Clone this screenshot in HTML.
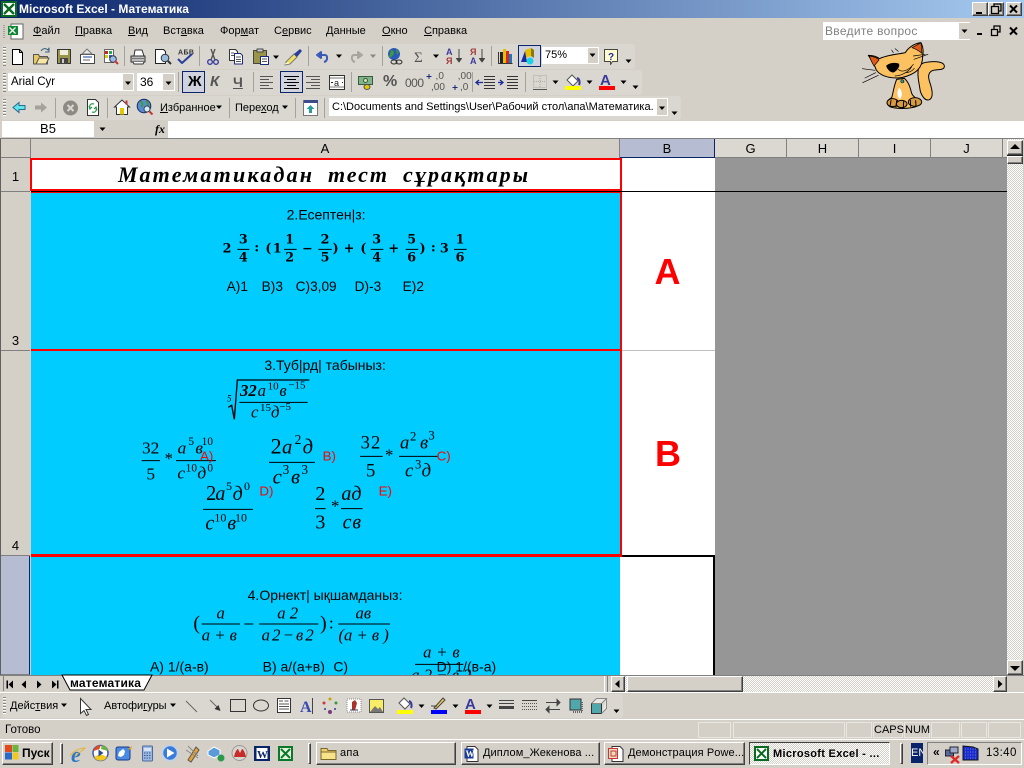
<!DOCTYPE html>
<html lang="ru">
<head>
<meta charset="utf-8">
<title>Microsoft Excel - Математика</title>
<style>
html,body{margin:0;padding:0;background:#d4d0c8}
#p{position:relative;width:1024px;height:768px;overflow:hidden;background:#d4d0c8;font:11px/14px "Liberation Sans","Noto Sans CJK JP",sans-serif;color:#000}
#p div,#p span.t{position:absolute;white-space:nowrap}
.tb{background:#dad7d0;border-radius:3px}
.grip{width:3px;background:repeating-linear-gradient(#8a877f 0 1px,#fff 1px 2px,transparent 2px 3px)}
.up{background:#d4d0c8;border:1px solid;border-color:#fff #404040 #404040 #fff;box-shadow:inset -1px -1px #808080;box-sizing:border-box}
.sel{background:#d0d3de;border:1px solid #0a246a;box-sizing:border-box}
.w{background:#fff}
.h{background:#dbd8d1;border-right:1px solid #808080;box-sizing:border-box;text-align:center;line-height:19px;font-size:13px}
.rh{left:1px;width:29px;background:#d4d0c8;text-align:center;font-size:13px;box-sizing:border-box;border-bottom:1px solid #808080}
.dith{background:repeating-conic-gradient(#fff 0 25%,#d4d0c8 0 50%) 0 0/2px 2px}
svg{position:absolute;left:0;top:0}
u{text-decoration-thickness:1px;text-underline-offset:1px}
</style>
</head>
<body>
<div id="p">

<!-- title bar -->
<div style="left:0;top:0;width:1024px;height:18px;background:linear-gradient(90deg,#0a246a,#a6caf0)"></div>
<div style="left:19px;top:2px;color:#fff;font-weight:bold;font-size:12px">Microsoft Excel - Математика</div>
<div class="up" style="left:972px;top:2px;width:16px;height:14px"></div>
<div class="up" style="left:988px;top:2px;width:16px;height:14px"></div>
<div class="up" style="left:1006px;top:2px;width:16px;height:14px"></div>

<!-- menu -->
<div style="left:33px;top:24px"><u>Ф</u>айл</div>
<div style="left:75px;top:24px"><u>П</u>равка</div>
<div style="left:128px;top:24px"><u>В</u>ид</div>
<div style="left:163px;top:24px">Вст<u>а</u>вка</div>
<div style="left:220px;top:24px">Фор<u>м</u>ат</div>
<div style="left:274px;top:24px">С<u>е</u>рвис</div>
<div style="left:326px;top:24px"><u>Д</u>анные</div>
<div style="left:382px;top:24px"><u>О</u>кно</div>
<div style="left:424px;top:24px"><u>С</u>правка</div>

<div class="w" style="left:823px;top:22px;width:147px;height:18px"></div>
<div style="left:825px;top:24px;color:#808080;font-size:12px;letter-spacing:.3px">Введите вопрос</div>
<div style="left:959px;top:23px;width:11px;height:16px;background:#d4d0c8"></div>

<!-- toolbars -->
<div class="tb" style="left:2px;top:44px;width:633px;height:25px"></div>
<div class="tb" style="left:2px;top:70px;width:640px;height:25px"></div>
<div class="tb" style="left:2px;top:96px;width:679px;height:24px"></div>
<div class="grip" style="left:3px;top:47px;height:19px"></div>
<div class="grip" style="left:3px;top:73px;height:19px"></div>
<div class="grip" style="left:3px;top:99px;height:18px"></div>

<div class="sel" style="left:518px;top:45px;width:23px;height:22px"></div>
<div class="w" style="left:542px;top:47px;width:45px;height:17px"></div>
<div style="left:545px;top:48px">75%</div>
<div class="w" style="left:587px;top:47px;width:12px;height:17px"></div>
<div style="left:588px;top:48px;width:10px;height:15px;background:#d4d0c8"></div>

<div class="w" style="left:8px;top:73px;width:126px;height:18px"></div>
<div style="left:11px;top:75px;font-size:11.500px">Arial Cyr</div>
<div style="left:123px;top:74px;width:10px;height:16px;background:#d4d0c8"></div>
<div class="w" style="left:137px;top:73px;width:38px;height:18px"></div>
<div style="left:140px;top:75px;font-size:12px">36</div>
<div style="left:163px;top:74px;width:11px;height:16px;background:#d4d0c8"></div>
<div class="sel" style="left:182px;top:71px;width:23px;height:22px"></div>
<div class="sel" style="left:280px;top:71px;width:23px;height:22px"></div>
<div style="left:188px;top:74px;font:bold 15px/16px 'Liberation Sans',sans-serif">Ж</div>
<div style="left:210px;top:74px;font:bold italic 15px/16px 'Liberation Sans',sans-serif;color:#555">К</div>
<div style="left:233px;top:74px;font:bold 14px/16px 'Liberation Sans',sans-serif;color:#555;text-decoration:underline">Ч</div>
<div style="left:383px;top:74px;font:bold 16px/16px 'Liberation Sans',sans-serif;color:#555">%</div>
<div style="left:405px;top:76px;font:12px/14px 'Liberation Sans',sans-serif;color:#555;letter-spacing:-.5px">000</div>
<div style="left:430px;top:72px;font:10px/10px 'Liberation Sans',sans-serif;color:#555">&nbsp;&nbsp;,0</div>
<div style="left:431px;top:83px;font:10px/10px 'Liberation Sans',sans-serif;color:#555">,00</div>
<div style="left:455px;top:72px;font:10px/10px 'Liberation Sans',sans-serif;color:#555">&nbsp;,00</div>
<div style="left:460px;top:83px;font:10px/10px 'Liberation Sans',sans-serif;color:#555">,0</div>

<div style="left:160px;top:101px"><u>И</u>збранное</div>
<div style="left:235px;top:101px">Пере<u>х</u>од</div>
<div class="w" style="left:329px;top:98px;width:339px;height:18px"></div>
<div style="left:332px;top:100px">C:\Documents and Settings\User\Рабочий стол\апа\Математика.</div>
<div style="left:657px;top:99px;width:10px;height:16px;background:#d4d0c8"></div>

<!-- formula bar -->
<div class="w" style="left:2px;top:121px;width:92px;height:16px"></div>
<div style="left:2px;top:122px;width:92px;text-align:center;font-size:13px">B5</div>
<div class="w" style="left:168px;top:121px;width:856px;height:17px"></div>
<div style="left:155px;top:122px;font:italic bold 12px/14px 'Liberation Serif',serif">fx</div>

<!-- grid header -->
<div style="left:0;top:138px;width:1024px;height:1px;background:#808080"></div>
<div style="left:0;top:139px;width:1px;height:536px;background:#606060"></div>
<div class="h" style="left:1px;top:139px;width:30px;height:19px;background:#d4d0c8;border-bottom:1px solid #808080"></div>
<div class="h" style="left:31px;top:139px;width:589px;height:19px;background:#d4d0c8">A</div>
<div class="h" style="left:620px;top:139px;width:95px;height:19px;background:#b6bdd2;border-right:1px solid #0a246a;border-bottom:1px solid #0a246a">B</div>
<div class="h" style="left:715px;top:139px;width:72px;height:18px">G</div>
<div class="h" style="left:787px;top:139px;width:72px;height:18px">H</div>
<div class="h" style="left:859px;top:139px;width:72px;height:18px">I</div>
<div class="h" style="left:931px;top:139px;width:72px;height:18px">J</div>
<div style="left:1003px;top:139px;width:4px;height:18px;background:#dbd8d1"></div>

<!-- row headers -->
<div class="rh" style="top:158px;height:34px;padding-top:12px">1</div>
<div class="rh" style="top:192px;height:159px;padding-top:142px">3</div>
<div class="rh" style="top:351px;height:205px;padding-top:188px">4</div>
<div class="rh" style="top:556px;height:119px;background:#b6bdd2;border-right:1px solid #0a246a"></div>

<!-- cells -->
<div style="left:31px;top:158px;width:976px;height:517px;background:#969696"></div>
<div class="w" style="left:31px;top:158px;width:684px;height:517px"></div>
<div style="left:31px;top:192px;width:589px;height:483px;background:#00ccff"></div>
<div style="left:31px;top:158px;width:590px;height:2px;background:#f00"></div>
<div style="left:31px;top:189px;width:591px;height:2px;background:#f00"></div>
<div style="left:31px;top:192px;width:591px;height:1px;background:#f00"></div>
<div style="left:31px;top:191px;width:976px;height:1px;background:#000"></div>
<div style="left:31px;top:349px;width:591px;height:2px;background:#f00"></div>
<div style="left:31px;top:554px;width:591px;height:3px;background:#f00"></div>
<div style="left:620px;top:158px;width:2px;height:33px;background:#f00"></div>
<div style="left:620px;top:192px;width:2px;height:365px;background:#f00"></div>
<div style="left:30px;top:158px;width:2px;height:33px;background:#f00"></div>
<div style="left:622px;top:350px;width:93px;height:1px;background:#c0c0c0"></div>
<div style="left:622px;top:555px;width:93px;height:2px;background:#000"></div>
<div style="left:713px;top:555px;width:2px;height:120px;background:#000"></div>
<div style="left:715px;top:157px;width:292px;height:1px;background:#808080"></div>

<div style="left:0;top:0;width:1024px;height:768px;pointer-events:none">
<svg width="1024" height="768" viewBox="0 0 1024 768" xmlns="http://www.w3.org/2000/svg" style="overflow:hidden">
<defs>
<path id="dr" d="M-3 -1.500h6l-3 3.500z" fill="#000"/>
<path id="drg" d="M-3 -1.500h6l-3 3.500z" fill="#888"/>
</defs>

<!-- ==== MATH ==== -->
<g font-family="'Liberation Serif',serif" fill="#000">
  <text x="118" y="182" font-size="22" font-weight="bold" font-style="italic" textLength="194" lengthAdjust="spacing">Математикадан</text>
  <text x="328" y="182" font-size="22" font-weight="bold" font-style="italic" textLength="59" lengthAdjust="spacing">тест</text>
  <text x="403" y="182" font-size="22" font-weight="bold" font-style="italic" textLength="125" lengthAdjust="spacing">сұрақтары</text>
</g>

<!-- Q2 -->
<g transform="translate(100,160) scale(.33333)">
  <text x="560" y="178" font-family="'Liberation Sans',sans-serif" font-size="42">2.Есептен|з:</text>
  <g font-family="'DejaVu Serif',serif" font-weight="bold" font-size="38" text-anchor="middle">
    <text x="381" y="277">2</text>
    <text x="430" y="250">3</text><text x="430" y="305">4</text>
    <text x="470" y="275">:</text><text x="505" y="277">(</text><text x="532" y="277">1</text>
    <text x="569" y="250">1</text><text x="569" y="305">2</text>
    <text x="622" y="277">−</text>
    <text x="675" y="250">2</text><text x="675" y="305">5</text>
    <text x="707" y="277">)</text><text x="747" y="277">+</text><text x="790" y="277">(</text>
    <text x="830" y="250">3</text><text x="830" y="305">4</text>
    <text x="881" y="277">+</text>
    <text x="935" y="250">5</text><text x="935" y="305">6</text>
    <text x="968" y="277">)</text><text x="1000" y="275">:</text><text x="1033" y="277">3</text>
    <text x="1080" y="250">1</text><text x="1080" y="305">6</text>
  </g>
  <g stroke="#000" stroke-width="3">
    <path d="M412 268h36M552 268h38M655 268h40M812 268h38M917 268h38M1062 268h38"/>
  </g>
  <g font-family="'Liberation Sans',sans-serif" font-size="41">
    <text x="380" y="393">А)1</text><text x="485" y="393">В)3</text><text x="587" y="393">С)3,09</text>
    <text x="764" y="393">D)-3</text><text x="908" y="393">Е)2</text>
  </g>
</g>

<!-- Q3 -->
<g transform="translate(120,350) scale(.33333)">
  <text x="433" y="60" font-family="'Liberation Sans',sans-serif" font-size="42">3.Туб|рд| табыныз:</text>
  <path d="M325 172l10 -6l8 42l9 -118h216" fill="none" stroke="#000" stroke-width="4"/>
  <path d="M358 157h205M65 332h55M168 332h120M447 337h138M720 319h68M837 319h118M249 478h150M585 476h32M663 476h65" stroke="#000" stroke-width="3"/>
  <g font-family="'Liberation Serif',serif">
    <text x="321" y="155" font-size="27" font-style="italic">5</text>
    <g font-size="50">
      <text x="360" y="138" font-weight="bold" font-style="italic" font-size="50">32</text>
      <text x="413" y="138" font-style="italic">а</text>
      <text x="478" y="138" font-style="italic">в</text>
      <text x="393" y="203" font-style="italic">с</text>
      <text x="453" y="203" font-style="italic">д</text>
    </g>
    <g font-size="33">
      <text x="443" y="118">10</text><text x="505" y="115">−15</text>
      <text x="420" y="183">15</text><text x="478" y="180">−5</text>
    </g>
    <!-- A -->
    <g font-size="52">
      <text x="92" y="310" text-anchor="middle">32</text><text x="92" y="388" text-anchor="middle">5</text>
      <text x="134" y="342" font-size="50">*</text>
      <g font-style="italic"><text x="173" y="310">а</text><text x="226" y="310">в</text><text x="172" y="385">с</text><text x="232" y="385">д</text></g>
    </g>
    <g font-size="34"><text x="205" y="285">5</text><text x="245" y="285">10</text><text x="197" y="365">10</text><text x="262" y="365">0</text></g>
    <!-- B -->
    <g font-size="66">
      <text x="452" y="310">2</text>
      <g font-style="italic" font-size="62"><text x="486" y="310">а</text><text x="548" y="310">д</text><text x="458" y="400">с</text><text x="513" y="400">в</text></g>
    </g>
    <g font-size="40"><text x="524" y="282">2</text><text x="488" y="372">3</text><text x="544" y="372">3</text></g>
    <!-- C -->
    <g font-size="56">
      <text x="722" y="295" letter-spacing="3">32</text><text x="752" y="380" text-anchor="middle">5</text>
      <text x="795" y="332" font-size="50">*</text>
      <g font-style="italic" font-size="56"><text x="840" y="295">а</text><text x="900" y="295">в</text><text x="855" y="380">с</text><text x="905" y="380">д</text></g>
    </g>
    <g font-size="38"><text x="870" y="272">2</text><text x="925" y="268">3</text><text x="885" y="355">3</text></g>
    <!-- D -->
    <g font-size="62">
      <text x="258" y="450">2</text>
      <g font-style="italic" font-size="60"><text x="286" y="450">а</text><text x="338" y="450">д</text><text x="256" y="538">с</text><text x="322" y="538">в</text></g>
    </g>
    <g font-size="36"><text x="318" y="420">5</text><text x="372" y="420">0</text><text x="283" y="515">10</text><text x="345" y="515">10</text></g>
    <!-- E -->
    <g font-size="60">
      <text x="601" y="450" text-anchor="middle">2</text><text x="601" y="535" text-anchor="middle">3</text>
      <text x="633" y="484" font-size="50">*</text>
      <g font-style="italic"><text x="664" y="450">а</text><text x="694" y="450">д</text><text x="668" y="535">с</text><text x="697" y="535">в</text></g>
    </g>
  </g>
  <g font-family="'Liberation Sans',sans-serif" font-size="40" fill="#f00">
    <text x="240" y="332">А)</text><text x="608" y="332">В)</text><text x="950" y="332">С)</text>
    <text x="418" y="437">D)</text><text x="776" y="437">Е)</text>
  </g>
</g>

<!-- Q4 -->
<g transform="translate(130,570) scale(.33333)">
  <text x="353" y="90" font-family="'Liberation Sans',sans-serif" font-size="42">4.Орнект| ықшамданыз:</text>
  <path d="M215 162h115M387 162h178M625 162h155M343 162h27" stroke="#000" stroke-width="3"/>
  <path d="M855 283h145" stroke="#000" stroke-width="3"/>
  <g font-family="'Liberation Serif',serif" font-size="50">
    <text x="190" y="178" font-size="60">(</text>
    <text x="570" y="178" font-size="60">)</text>
    <text x="597" y="175" font-size="50">:</text>
    <g font-style="italic" text-anchor="middle">
      <text x="272" y="145">а</text>
      <text x="268" y="212">а + в</text>
      <text x="473" y="145">а 2</text>
      <text x="473" y="212" word-spacing="-6">а 2 − в 2</text>
      <text x="700" y="145">ав</text>
      <text x="701" y="212">(а + в )</text>
      <text x="934" y="262" word-spacing="2">а + в</text>
      <text x="934" y="332">а 2 − в 2</text>
    </g>
  </g>
  <g font-family="'Liberation Sans',sans-serif" font-size="42">
    <text x="60" y="305">А) 1/(а-в)</text>
    <text x="398" y="305">В) а/(а+в)</text>
    <text x="610" y="305">С)</text>
    <text x="920" y="305">D) 1/(в-а)</text>
  </g>
</g>

<text x="667.500" y="284" font-family="'Liberation Sans',sans-serif" font-weight="bold" font-size="36" fill="#f00" text-anchor="middle">A</text>
<text x="668" y="466" font-family="'Liberation Sans',sans-serif" font-weight="bold" font-size="36" fill="#f00" text-anchor="middle">B</text>

<!-- ==== TITLE ICON + WINDOW BTNS ==== -->
<rect x="1" y="1" width="16" height="16" fill="#0a6a20"/><rect x="3" y="3" width="12" height="12" fill="#fff"/>
<path d="M4 4l10 10M14 4L4 14" stroke="#0a6a20" stroke-width="2.400"/>
<path d="M976 12h6v2h-6z" fill="#000"/>
<path d="M991.500 6.500h7v7h-7zM994 6V4h7v7h-2" fill="none" stroke="#000" stroke-width="1.300"/>
<path d="M1010 5.500l7 7M1017 5.500l-7 7" stroke="#000" stroke-width="2"/>

<!-- menu excel icon -->
<path d="M11 24h12v15H11z" fill="#fff" stroke="#666"/><rect x="8" y="26" width="10" height="9" fill="#0a8a30"/><path d="M9.500 27.500l6 6M15.500 27.500l-6 6" stroke="#fff" stroke-width="1.300"/>
<path d="M4 25v13" stroke="#a5a29a" stroke-width="2" stroke-dasharray="1 1"/>
<path d="M977 33h5v2h-5z" fill="#000"/>
<path d="M991.500 29.500h6v6h-6zM994 29v-3h6v6h-2" fill="none" stroke="#000" stroke-width="1.300"/>
<path d="M1010 27.500l7 7M1017 27.500l-7 7" stroke="#000" stroke-width="2"/>
<use href="#dr" x="964.500" y="31"/>

<!-- ==== TOOLBAR 1 ==== -->
<g stroke-linejoin="round">
<path d="M12.500 49.500h7l3 3v12h-10z" fill="#fff" stroke="#000"/><path d="M19.500 49.500v3h3" fill="none" stroke="#000"/>
<path d="M33.500 54.500h5l1 2h8v7.500h-14z" fill="#e8c860" stroke="#555"/><path d="M36 64l3-6h10l-3 6z" fill="#f6e7a6" stroke="#555"/><path d="M41 51c2-3 5-3 7-1l1-2v4h-4" fill="none" stroke="#36627a"/>
<rect x="57.500" y="49.500" width="13" height="14" fill="#9a9448" stroke="#333"/><rect x="60" y="50" width="8" height="5" fill="#efeddc"/><rect x="60" y="58" width="8" height="6" fill="#444"/><rect x="62" y="59" width="2" height="4" fill="#ccc"/>
<rect x="80.500" y="54.500" width="14" height="9" fill="#fff" stroke="#444"/><path d="M82 54l5-5 5 5z" fill="#e6e6e6" stroke="#777"/><path d="M83 57h9" stroke="#1a3c9a"/><path d="M83 60h7" stroke="#666"/>
<rect x="104.500" y="49.500" width="9" height="13" fill="#fff" stroke="#666"/><rect x="105" y="51" width="3" height="3" fill="#c22"/><rect x="109" y="51" width="3" height="3" fill="#2a5"/><rect x="105" y="55" width="3" height="3" fill="#e6c800"/><rect x="109" y="55" width="3" height="3" fill="#26c"/><circle cx="113" cy="59" r="3.300" fill="#9be" stroke="#333"/><path d="M115 61l3 3" stroke="#c33" stroke-width="2"/>
<path d="M131 56h14v6h-14z" fill="#bbb" stroke="#333"/><path d="M134 56l1-6h7l2 6z" fill="#fff" stroke="#333"/><path d="M133 62l1 2h9l1-2" fill="#fff" stroke="#333"/><path d="M132 58.500h12" stroke="#777"/>
<path d="M155.500 49.500h8l2 2v12h-10z" fill="#fff" stroke="#222"/><circle cx="165" cy="58" r="3.800" fill="#9bd" stroke="#333"/><path d="M168 61l3 3" stroke="#333" stroke-width="2"/>
<text x="178" y="54.500" font-family="'Liberation Sans',sans-serif" font-size="7" font-weight="bold" fill="#333" letter-spacing=".4">АБВ</text><path d="M178 59l4 4 10-9" fill="none" stroke="#2a3f9a" stroke-width="2"/>
<g fill="none" stroke="#3a3aa0" stroke-width="1.400"><circle cx="210" cy="62" r="2.300"/><circle cx="216" cy="62" r="2.300"/><path d="M211 60l4-11M215 60l-4-11" stroke="#555"/></g>
<path d="M229.500 49.500h6l2 2v9h-8z" fill="#fff" stroke="#333"/><path d="M234.500 53.500h6l2 2v8.500h-8z" fill="#fff" stroke="#1a2a7a"/><path d="M231 53h3M231 55.500h3M236 57h5M236 59.500h5M236 61.500h5" stroke="#555"/>
<rect x="253.500" y="50.500" width="13" height="13" fill="#9a9448" stroke="#444"/><rect x="257" y="49" width="6" height="3" fill="#ccc" stroke="#444"/><path d="M260.500 56.500h8v8h-8z" fill="#fff" stroke="#1a2a7a"/><path d="M262 59h5M262 61.500h5" stroke="#555"/>
<use href="#dr" x="276" y="57"/>
<path d="M286 62l8-8 3 3-7 7-5 1z" fill="#f2e45a" stroke="#777"/><path d="M294 54l6-5 2 2-5 6z" fill="#2a3f9a"/><path d="M285 64l4-1" stroke="#fff"/>
<path d="M317 55l4-3v6zM319 55h6c3 0 3 6-1 7" fill="none" stroke="#3a5ab8" stroke-width="2"/><use href="#dr" x="339" y="56"/>
<path d="M362 55l-4-3v6zM360 55h-6c-3 0-3 6 1 7" fill="none" stroke="#a8a59e" stroke-width="2"/><use href="#drg" x="373" y="56"/>
<circle cx="394" cy="54" r="6" fill="#2a5ab8"/><path d="M391 50c3 0 4 3 2 5s-2 3-4 2M396 49l3 3-2 3" fill="#3d9a3d"/><g fill="none" stroke="#333"><ellipse cx="394" cy="62" rx="3" ry="2"/><ellipse cx="399" cy="62" rx="3" ry="2"/></g>
<text x="414" y="62" font-family="'Liberation Serif',serif" font-size="15" fill="#555">Σ</text><use href="#dr" x="436" y="56"/>
<text x="446" y="55" font-family="'Liberation Sans',sans-serif" font-size="9" font-weight="bold" fill="#3a3aa0">А</text><text x="446" y="64" font-family="'Liberation Sans',sans-serif" font-size="9" font-weight="bold" fill="#a03a3a">Я</text><path d="M459 49v12M456.500 58.500l2.500 3.500 2.500-3.500z" stroke="#444" fill="#444"/>
<text x="470" y="55" font-family="'Liberation Sans',sans-serif" font-size="9" font-weight="bold" fill="#a03a3a">Я</text><text x="470" y="64" font-family="'Liberation Sans',sans-serif" font-size="9" font-weight="bold" fill="#3a3aa0">А</text><path d="M482 49v12M479.500 58.500l2.500 3.500 2.500-3.500z" stroke="#444" fill="#444"/>
<path d="M498.500 52v11.500h14" fill="none" stroke="#333"/><rect x="500" y="52" width="3" height="11" fill="#222"/><rect x="503" y="49" width="3" height="14" fill="#e6c000"/><rect x="506" y="51" width="3" height="12" fill="#d22"/><rect x="509" y="54" width="3" height="9" fill="#27b"/>
<path d="M525 50l6-2v8l-6 2z" fill="#e6c000"/><path d="M531 48l3 2v8l-3-2z" fill="#8a7a00"/><path d="M521 62l4-11 2 11zM519 62l6-2" fill="#1a2a9a"/><circle cx="530" cy="61" r="3.500" fill="#1ad2e6"/>
<use href="#dr" x="592.500" y="55"/>
<path d="M604.500 49.500h13v12h-5l-2 3v-3h-6z" fill="#fffbd0" stroke="#444"/><text x="608" y="60" font-family="'Liberation Sans',sans-serif" font-size="10" font-weight="bold" fill="#1a2a9a">?</text>
<use href="#dr" x="628.500" y="61"/>
</g>
<g stroke="#a5a29a"><path d="M124.500 46v20M199.500 46v20M308.500 46v20M382.500 46v20M491.500 46v20M178.500 72v20M253.500 72v20M351.500 72v20M472.500 72v20M525.500 72v20M55.500 98v20M107.500 98v20M229.500 98v20M295.500 98v20M324.500 98v20M97.500 697v21M390.500 697v21"/></g>

<!-- ==== TOOLBAR 2 ==== -->
<use href="#dr" x="128" y="83"/><use href="#dr" x="168.500" y="83"/>
<g stroke="#555"><path d="M260 76.500h13M260 79.500h9M260 82.500h13M260 85.500h9M260 88.500h13"/></g>
<g stroke="#000"><path d="M284 76.500h15M287 79.500h9M284 82.500h15M287 85.500h9M284 88.500h15"/></g>
<g stroke="#555"><path d="M306 76.500h14M311 79.500h9M306 82.500h14M311 85.500h9M306 88.500h14"/></g>
<rect x="329.500" y="75.500" width="15" height="14" fill="#fff" stroke="#333"/><path d="M330 78h14M330 87h14" stroke="#777"/><text x="334" y="86" font-family="'Liberation Sans',sans-serif" font-size="9" fill="#222">a</text><path d="M331 82.500h2M342 82.500h1" stroke="#222"/>
<rect x="358.500" y="76.500" width="14" height="8" fill="#7fb58a" stroke="#3a5a40"/><circle cx="365.500" cy="80.500" r="2" fill="#d9e5b0" stroke="#3a5a40"/><ellipse cx="367" cy="87" rx="3" ry="2.500" fill="#e6c800" stroke="#555"/>
<g stroke="#1a2a7a" fill="none"><path d="M429 74v5M426.500 76.500h5"/><path d="M455 85v5M452.500 87.500h5"/></g>
<g stroke="#333"><path d="M484 76.500h11M484 79.500h11M484 82.500h11M484 85.500h11M484 88.500h11"/><path d="M507 76.500h11M507 79.500h11M507 82.500h11M507 85.500h11M507 88.500h11"/></g>
<path d="M483 82.500h-6M479 80l-3 2.500 3 2.500" fill="none" stroke="#1a2a9a" stroke-width="1.300"/><path d="M503 82.500h-5M500 80l3 2.500-3 2.500" fill="none" stroke="#1a2a9a" stroke-width="1.300"/>
<g stroke="#aaa" stroke-dasharray="1 1" fill="none"><rect x="533.500" y="75.500" width="13" height="12"/><path d="M540 76v12M534 81.500h12"/></g><path d="M533 89.500h14" stroke="#555"/>
<use href="#dr" x="555.500" y="82"/>
<path d="M567 80l5-5 6 6-5 5z" fill="#fff" stroke="#555"/><path d="M577 78c3 1 3 5 2 7" fill="none" stroke="#3a3a9a" stroke-width="2"/><rect x="565" y="86" width="16" height="4" fill="#ff0"/>
<use href="#dr" x="589.500" y="82"/>
<text x="600" y="85" font-family="'Liberation Sans',sans-serif" font-size="15" font-weight="bold" fill="#3a3a9a">A</text><rect x="599" y="86" width="16" height="4" fill="#f00"/>
<use href="#dr" x="623.500" y="82"/><use href="#dr" x="635.500" y="87"/>

<!-- ==== TOOLBAR 3 ==== -->
<path d="M13 107.500l6-5v3h6v4h-6v3z" fill="#5ee6f0" stroke="#2a6a8a"/>
<path d="M47 107.500l-6-5v3h-6v4h6v3z" fill="#a5a29a"/>
<circle cx="70.500" cy="108" r="7.500" fill="#8c8a84"/><path d="M67.500 105l6 6M73.500 105l-6 6" stroke="#dad7d0" stroke-width="2"/>
<path d="M87.500 99.500h8l3 3v13h-11z" fill="#fff" stroke="#333"/><path d="M94 104c-3-1-5 1-4 4M89 106l1 3 2-2M92 112c3 1 5-1 4-4M97 110l-1-3-2 2" fill="none" stroke="#2a9a4a" stroke-width="1.200"/>
<path d="M122 100l-7.500 7h2v7.500h11V107h2z" fill="#fff" stroke="#333"/><rect x="120" y="108" width="4" height="6.500" fill="#e6c800"/><rect x="125.500" y="100.500" width="2" height="4" fill="#c33"/>
<circle cx="144" cy="106" r="6.800" fill="#5a8ad8" stroke="#1a2a5a"/><path d="M140 102c3 0 3 3 1 5M146 101c2 2 3 4 1 6" stroke="#3d9a3d" stroke-width="2" fill="none"/><circle cx="147" cy="109" r="3" fill="#ccefff" stroke="#444"/><path d="M149.500 111.500l3 3" stroke="#c33" stroke-width="2"/>
<use href="#dr" x="219" y="107"/><use href="#dr" x="285" y="107"/>
<rect x="303.500" y="100.500" width="14" height="15" fill="#fff" stroke="#777"/><rect x="304" y="100" width="14" height="3" fill="#3a4a8a"/><path d="M310.500 105l4 4h-2.500v4h-3v-4h-2.500z" fill="#2a9a9a"/>
<use href="#dr" x="662" y="108"/><use href="#dr" x="674.500" y="113"/>
<use href="#dr" x="102.500" y="129"/>

<!-- ==== CAT ==== -->
<g transform="translate(850,36) scale(.33333)" stroke="#000" stroke-width="3" stroke-linejoin="round" stroke-linecap="round">
  <path d="M205 130c-5-40 5-50 30-52 25-3 50 0 48 14-2 14-30 5-40 14-14 12-4 30 0 45 6 22 5 35-5 40-12 5-22-10-27-25z" fill="#fcc262"/>
  <path d="M140 130c-10 25-10 40-15 55-15 8-18 20-5 27 10 5 40 8 70 2 20-4 22-15 15-22-6-6-15-8-20-20-5-20-10-35-22-45z" fill="#fcc262"/>
  <path d="M148 155c-8 12-8 25 2 35 8-12 8-22-2-35z" fill="#fff" stroke="none"/>
  <ellipse cx="128" cy="200" rx="17" ry="12" fill="#d89a40"/><ellipse cx="155" cy="204" rx="16" ry="11" fill="#d89a40"/><ellipse cx="195" cy="198" rx="20" ry="13" fill="#d89a40"/>
  <path d="M120 212l3-18M138 213l2-18M160 214l1-18M182 211l-1-18M198 210l-1-16" stroke-width="3" fill="none"/>
  <path d="M78 100c-5-15-15-30-23-42 15 0 25 3 33 10 25-12 50-12 78-18 8-15 28-28 47-30 5 10 8 25 5 40 0 15-3 30-15 42-15 15-45 24-62 24-30 0-55-10-63-26z" fill="#fcc262"/>
  <path d="M58 60c15 2 25 5 29 12l-15 18c-6-10-11-20-14-30zM186 35l27-15 3 32c-10-8-20-14-30-17z" fill="#e05a18" stroke-width="2"/>
  <path d="M110 90c8-8 25-10 35-6 5 5-5 20-15 24-8 0-17-8-20-18z" fill="#000"/>
  <path d="M145 100c10 10 30 5 45-15M165 110c12 0 22-5 28-13M135 120c15 0 40-10 50-28" fill="none" stroke-width="2"/>
  <path d="M75 103l-38-5M77 110l-32 16M85 118l-47 22M190 60l35-5M192 70l42-15M130 50l-5-8M145 46l-10-8" fill="none" stroke-width="2"/>
  <circle cx="157" cy="136" r="5" fill="#2a9a9a" stroke-width="1.500"/>
</g>
</svg>
</div>

<!-- tab bar -->
<div style="left:0;top:675px;width:1024px;height:18px;background:#d4d0c8;border-top:1px solid #808080;box-sizing:border-box"></div>
<div style="left:3px;top:676px;width:1px;height:15px;background:#808080"></div>
<svg width="1024" height="768" style="pointer-events:none" xmlns="http://www.w3.org/2000/svg">
  <path d="M6.500 680.500h1.500v8h-1.500zM13 680.500v8l-4.500-4z" fill="#000"/>
  <path d="M26 680.500v8l-4.500-4z" fill="#000"/>
  <path d="M37 680.500v8l4.500-4z" fill="#000"/>
  <path d="M52 680.500v8l4.500-4zM57 680.500h1.500v8H57z" fill="#000"/>
  <path d="M62 675l8 15h74l8-15z" fill="#fff" stroke="#000"/>
  <path d="M607.500 676v16" stroke="#808080"/>
</svg>
<div style="left:70px;top:676px;font-weight:bold;font-size:12px;letter-spacing:.2px">математика</div>
<div style="left:604px;top:676px;width:4px;height:16px;background:#d4d0c8;border-left:1px solid #fff;border-right:1px solid #808080;box-sizing:border-box"></div>
<div class="dith" style="left:611px;top:676px;width:396px;height:16px"></div>
<div class="up" style="left:611px;top:676px;width:14px;height:16px"></div>
<div class="up" style="left:627px;top:676px;width:116px;height:16px"></div>
<div class="up" style="left:993px;top:676px;width:14px;height:16px"></div>

<!-- vscroll -->
<div class="dith" style="left:1007px;top:139px;width:16px;height:536px"></div>
<div class="up" style="left:1007px;top:140px;width:16px;height:15px"></div>
<div class="up" style="left:1007px;top:156px;width:16px;height:8px"></div>
<div class="up" style="left:1007px;top:660px;width:16px;height:15px"></div>
<div style="left:1007px;top:155px;width:16px;height:1px;background:#222"></div>

<!-- drawing toolbar -->
<div style="left:0;top:692px;width:1024px;height:1px;background:#fff"></div>
<div class="tb" style="left:2px;top:694px;width:621px;height:24px"></div>
<div class="grip" style="left:3px;top:697px;height:18px"></div>
<div style="left:10px;top:699px">Дейс<u>т</u>вия</div>
<div style="left:104px;top:699px">Автофи<u>г</u>уры</div>
<div style="left:0;top:719px;width:1024px;height:1px;background:#fff"></div>
<div style="left:5px;top:723px;font-size:11.500px">Готово</div>

<!-- status panels -->
<div style="left:698px;top:722px;width:33px;height:16px;border:1px solid #e8e6e0;box-sizing:border-box"></div>
<div style="left:733px;top:722px;width:112px;height:16px;border:1px solid #e8e6e0;box-sizing:border-box"></div>
<div style="left:846px;top:722px;width:26px;height:16px;border:1px solid #e8e6e0;box-sizing:border-box"></div>
<div style="left:873px;top:722px;width:30px;height:16px;border:1px solid #e8e6e0;box-sizing:border-box;line-height:14px;text-align:center">CAPS</div>
<div style="left:904px;top:722px;width:26px;height:16px;border:1px solid #e8e6e0;box-sizing:border-box;line-height:14px;text-align:center">NUM</div>
<div style="left:931px;top:722px;width:29px;height:16px;border:1px solid #e8e6e0;box-sizing:border-box"></div>
<div style="left:961px;top:722px;width:26px;height:16px;border:1px solid #e8e6e0;box-sizing:border-box"></div>
<div style="left:988px;top:722px;width:33px;height:16px;border:1px solid #e8e6e0;box-sizing:border-box"></div>

<!-- taskbar -->
<div style="left:0;top:739px;width:1024px;height:29px;background:#d4d0c8;border-top:1px solid #fff;box-sizing:border-box"></div>
<div class="up" style="left:2px;top:742px;width:51px;height:23px"></div>
<div style="left:22px;top:746px;font-weight:bold;font-size:12px">Пуск</div>
<div class="up" style="left:60px;top:743px;width:3px;height:21px"></div>
<div class="up" style="left:308px;top:743px;width:3px;height:21px"></div>
<div class="up" style="left:316px;top:742px;width:140px;height:23px"></div>
<div style="left:340px;top:746px;letter-spacing:.3px">апа</div>
<div class="up" style="left:461px;top:742px;width:139px;height:23px"></div>
<div style="left:483px;top:746px;letter-spacing:.1px">Диплом_Жекенова ...</div>
<div class="up" style="left:604px;top:742px;width:141px;height:23px"></div>
<div style="left:628px;top:746px;letter-spacing:.1px">Демонстрация Powe...</div>
<div class="dith" style="left:749px;top:742px;width:141px;height:23px;border:1px solid;border-color:#404040 #fff #fff #404040;box-sizing:border-box"></div>
<div style="left:773px;top:747px;font-weight:bold;font-size:11px;letter-spacing:.3px">Microsoft Excel - ...</div>
<div class="up" style="left:900px;top:743px;width:3px;height:21px"></div>
<div style="left:911px;top:743px;width:12px;height:20px;background:#0a246a;color:#fff;line-height:20px;overflow:hidden">EN</div>
<div style="left:927px;top:742px;width:95px;height:23px;border:1px solid;border-color:#808080 #fff #fff #808080;box-sizing:border-box"></div>
<div style="left:933px;top:745px;font-weight:bold;font-size:12px">«</div>
<div style="left:986px;top:746px;letter-spacing:.4px;font-size:11.500px">13:40</div>

<svg width="1024" height="768" style="pointer-events:none" xmlns="http://www.w3.org/2000/svg">
<defs><path id="d2" d="M-3 -1.500h6l-3 3.500z" fill="#000"/></defs>
<!-- scroll arrows -->
<path d="M619.500 680v8l-4.500-4zM998 680v8l4.500-4zM1015 144l-5 5h10zM1015 671l-5-5h10z" fill="#000"/>
<!-- drawing icons -->
<use href="#d2" x="64" y="705"/><use href="#d2" x="173" y="705"/>
<path d="M80.500 698.500v15l3.500-3 2.500 5 2-1-2.500-5h5z" fill="#fff" stroke="#333"/>
<path d="M186 701l11 11" stroke="#666"/>
<path d="M210 700l10 10" stroke="#666"/><path d="M220.500 711l-6-2 4-4z" fill="#333"/>
<rect x="230.500" y="699.500" width="15" height="12" fill="none" stroke="#333"/>
<ellipse cx="261" cy="705.500" rx="7.500" ry="5.500" fill="none" stroke="#333"/>
<rect x="277.500" y="698.500" width="13" height="14" fill="#fff" stroke="#333"/><path d="M279 701h4M284.500 701h4M279 704h10M279 706.500h10M279 709h10" stroke="#555"/>
<text x="300" y="712" font-family="'Liberation Serif',serif" font-size="16" font-weight="bold" fill="#3a4ab0">A</text><path d="M312.500 698v16" stroke="#444"/>
<g fill="#3a3a9a"><circle cx="330" cy="699" r="1.500" fill="#c8a000"/><circle cx="336" cy="703" r="1.500" fill="#3a9a3a"/><circle cx="330" cy="712" r="2" fill="#7a3a7a"/><circle cx="324" cy="703" r="1.500" fill="#c83a3a"/><circle cx="335" cy="709" r="1"/><circle cx="325" cy="709" r="1"/></g>
<rect x="347" y="699" width="14" height="13" fill="#fff" stroke="#888" stroke-dasharray="1 1"/><path d="M352 702l3-2 2 3-1 4-1 3h-3z" fill="#a8352a"/><path d="M350 710h8" stroke="#335"/>
<rect x="369.500" y="699.500" width="14" height="13" fill="#f8ee66" stroke="#555"/><path d="M370 712l5-6 3 3 2-2 3 5z" fill="#777"/>
<use href="#d2" x="421.500" y="706"/><use href="#d2" x="455.500" y="706"/><use href="#d2" x="489.500" y="706"/><use href="#d2" x="616.500" y="711"/>
<path d="M399 703l5-5 6 6-5 5z" fill="#fff" stroke="#555"/><path d="M409 701c3 1 3 5 2 7" fill="none" stroke="#3a3a9a" stroke-width="2"/><rect x="397" y="710" width="16" height="4" fill="#ff0"/>
<path d="M434 708l9-10 2 2-9 9z" fill="#eac75a" stroke="#444"/><path d="M431 706h6" stroke="#444"/><rect x="431" y="710" width="16" height="4" fill="#00f"/>
<text x="465" y="709" font-family="'Liberation Sans',sans-serif" font-size="15" font-weight="bold" fill="#3a3a9a">A</text><rect x="465" y="710" width="16" height="4" fill="#f00"/>
<path d="M499 700.500h15M499 703.500h15" stroke="#444"/><rect x="499" y="706" width="15" height="3" fill="#444"/>
<path d="M522 700.500h15" stroke="#444"/><path d="M522 703.500h15M522 706.500h15M522 709.500h15" stroke="#555" stroke-dasharray="1 1"/>
<path d="M546 702.500h14M560 702.500l-3-3v6zM546 709.500h14M546 709.500l3-3v6z" stroke="#444" fill="#444"/>
<rect x="570" y="699" width="11" height="11" fill="#50a8ac" stroke="#333"/><path d="M582 702v10h-10" stroke="#666" stroke-width="2" fill="none" stroke-dasharray="1 1"/>
<path d="M591.500 703.500h10v10h-10z" fill="#50a8ac" stroke="#333"/><path d="M591.500 703.500l5-5h10l-5 5M601.500 713.500l5-5v-10" fill="#e9e8e2" stroke="#888"/>

<!-- taskbar icons -->
<g>
<rect x="5" y="745" width="7" height="7" fill="#e04a1e"/><rect x="12.500" y="745" width="6" height="7" fill="#6cb33a"/><rect x="5" y="752.500" width="7" height="7" fill="#2a6ac8"/><rect x="12.500" y="752.500" width="6" height="7" fill="#f2c820"/>

<text x="71" y="762" font-family="'Liberation Serif',serif" font-size="22" font-weight="bold" font-style="italic" fill="#2a76c8">e</text><path d="M70 756c3-5 10-8 15-8-1 2-6 4-10 8" fill="none" stroke="#e6b23a"/>
<circle cx="100.500" cy="753" r="7.500" fill="#fff" stroke="#3a5ab8" stroke-width="1.500"/><path d="M93.500 751a7.500 7.500 0 0 1 7-6l-1 4z" fill="#e04a1e"/><path d="M108 751a7.500 7.500 0 0 0-6-6l-1 4z" fill="#6cb33a"/><path d="M94 757a7.500 7.500 0 0 0 13 0l-4-2h-5z" fill="#f2c820"/><path d="M98.500 749.500l5 3.500-5 3.500z" fill="#2a4a8a"/>
<rect x="116" y="747" width="14" height="13" rx="2" fill="#4a8ae0" stroke="#1a3a8a"/><path d="M119 752l4-3 2 2-1 4-3 2-3-1z" fill="#fff"/><path d="M128 749l4-3-1 4z" fill="#e6a020"/>
<rect x="142.500" y="746" width="10" height="15" rx="1" fill="#9cb8e0" stroke="#4a6aa0"/><rect x="144" y="748" width="7" height="3" fill="#d8e4f4"/><path d="M144 753h7M144 755.500h7M144 758h7" stroke="#3a5a90" stroke-dasharray="1.500 1"/>
<circle cx="170" cy="753" r="7.500" fill="#3a7ad8" stroke="#bcd2f0" stroke-width="1.500"/><path d="M167 748.500l7.500 4.500-7.500 4.500z" fill="#fff"/>
<path d="M188 760l8-13 3 3-8 12z" fill="#e8a030" stroke="#555"/><path d="M186 750l12 8M188 746l10 10" stroke="#888" fill="none"/>
<path d="M208 751l6-4 6 3v5l-6 3-6-3z" fill="#5a9ad8" stroke="#fff"/><circle cx="221" cy="758" r="3.500" fill="#2a9a4a"/>
<circle cx="239.500" cy="753" r="7.500" fill="#d8d5ce" stroke="#999"/><path d="M234 757c1-5 3-8 4-8l2 4 2-4c1 0 3 3 4 8z" fill="#c82a2a"/>
<rect x="254" y="746" width="16" height="15" fill="#0a246a"/><rect x="256.500" y="748" width="11" height="11" fill="#fff"/><text x="257" y="758" font-family="'Liberation Serif',serif" font-size="11" font-weight="bold" fill="#0a246a">W</text>
<rect x="278" y="746" width="15" height="15" fill="#0a7a2a"/><rect x="280" y="748" width="11" height="11" fill="#e8f4e0"/><path d="M281 749l9 9M290 749l-9 9" stroke="#0a7a2a" stroke-width="2"/>

<path d="M321 748.500h6l1 2h8v9h-15z" fill="#f2d070" stroke="#7a6a2a"/><path d="M321 752h15v7.500h-15z" fill="#f8e28a" stroke="#7a6a2a"/>
<path d="M467 746.500h8l3 3v12h-11z" fill="#fff" stroke="#333"/><rect x="464.500" y="748.500" width="9" height="10" fill="#1a3a9a"/><text x="465.500" y="757" font-family="'Liberation Serif',serif" font-size="9" font-weight="bold" fill="#fff">W</text>
<path d="M612 746.500h8l3 3v12h-11z" fill="#fff" stroke="#333"/><rect x="608.500" y="748.500" width="9" height="10" fill="#e8e0c0" stroke="#c33"/><path d="M611 751h5v5h-5z" fill="none" stroke="#c33"/>
<rect x="754" y="746" width="15" height="15" fill="#0a6a20"/><rect x="756" y="748" width="11" height="11" fill="#fff"/><path d="M757 749l9 9M766 749l-9 9" stroke="#0a6a20" stroke-width="2"/>
<rect x="945.500" y="750" width="8" height="6" fill="#5a6a9a" stroke="#223"/><rect x="950" y="747" width="8" height="6" fill="#a0a8c8" stroke="#223"/><path d="M951 756l8 7M959 756l-8 7" stroke="#e02a2a" stroke-width="2.400"/>
<path d="M963 746l10 1 5 2v11h-15z" fill="#1a2acc" stroke="#111"/><path d="M965 749h11M965 752h12M965 755h12M965 758h12" stroke="#6a8ae0" stroke-dasharray="1 1.500"/>
</g>
</svg>
</div>
</body>
</html>
